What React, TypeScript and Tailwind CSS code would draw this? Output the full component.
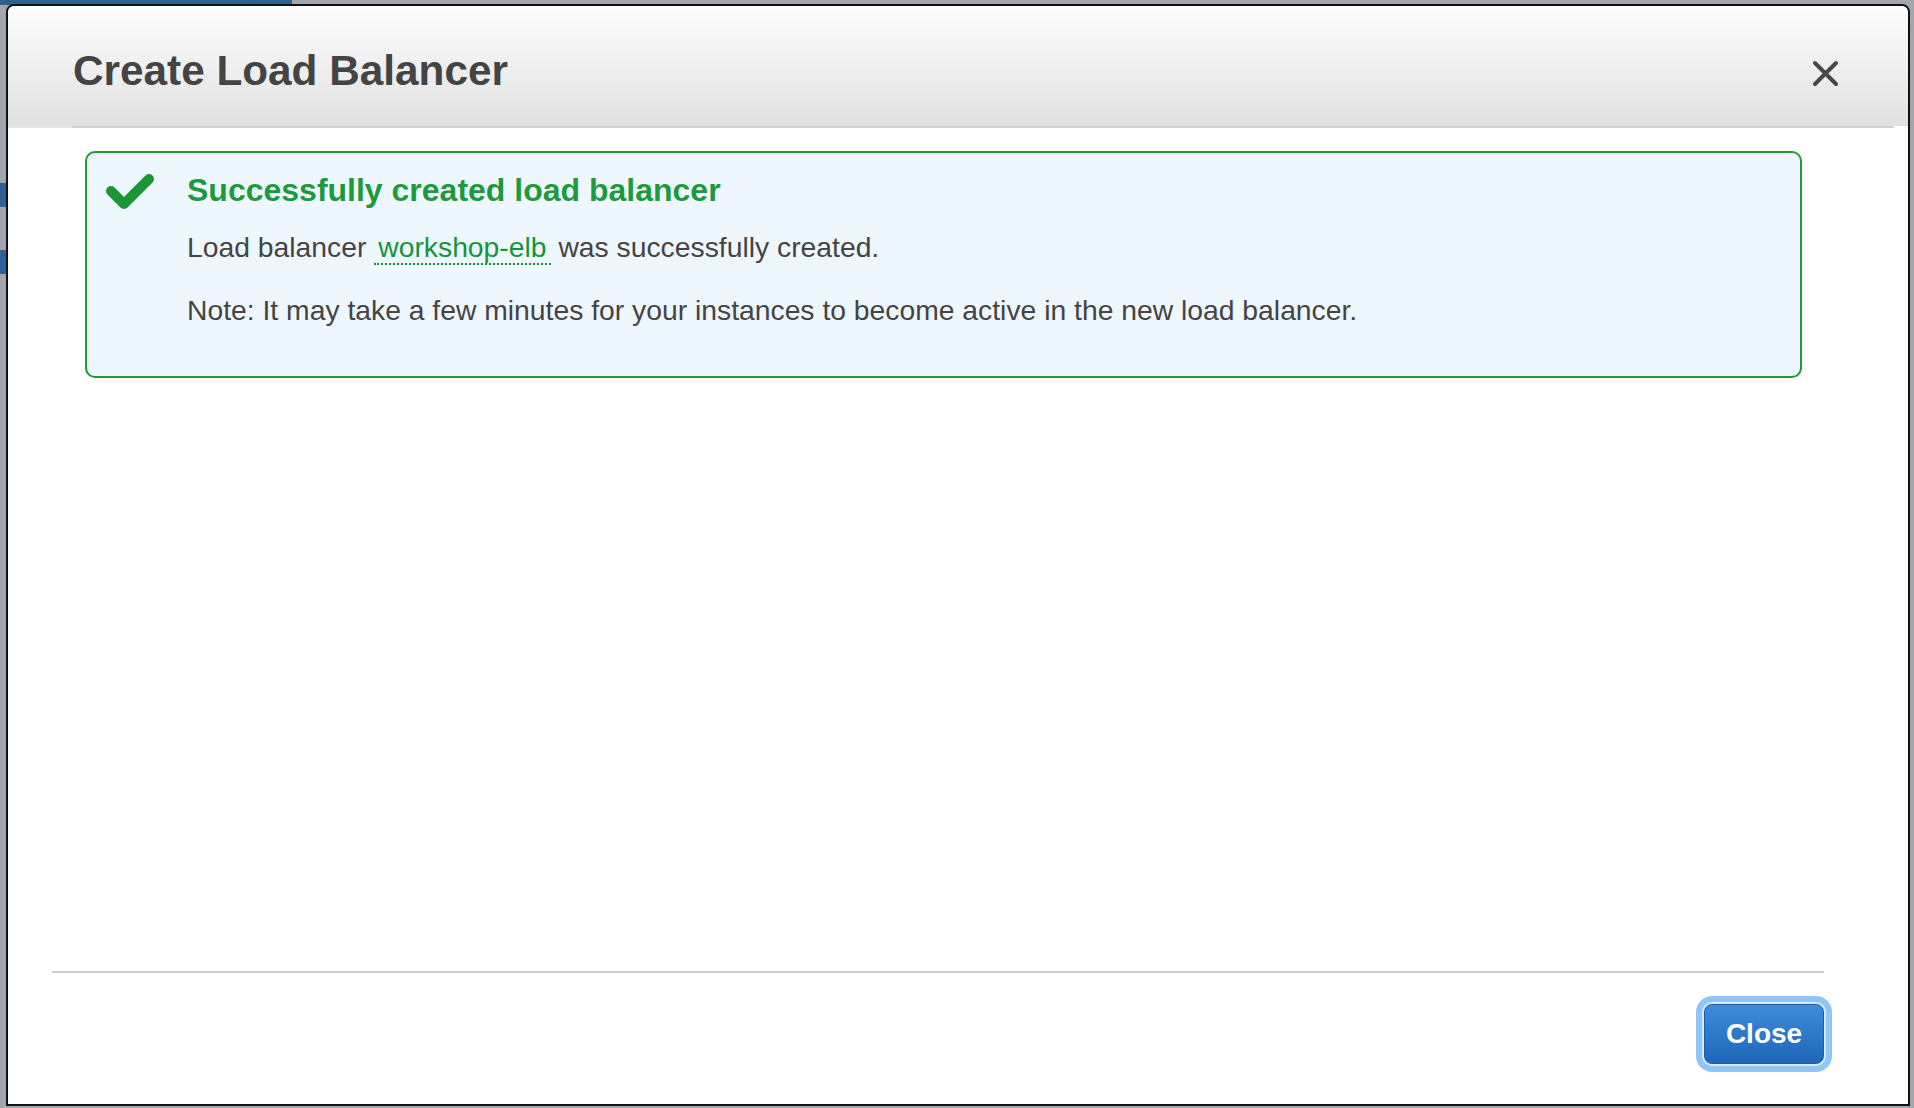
// Success alert shown after a load balancer is created
function SuccessAlert() {
  return (
    <div className="ml-[77px] mr-[106px] mt-[23px] h-[227px] rounded-[10px] border-2 border-[#1d9a3b] bg-[#eff7fe] pl-[19px] pt-[20px] flex">
      <svg width="48" height="37" viewBox="0 0 48 37" className="shrink-0">
        <path
          d="M5 18 L18 31 L43 6"
          fill="none"
          stroke="#1a9636"
          strokeWidth="10"
          strokeLinecap="round"
          strokeLinejoin="round"
        />
      </svg>
      <div className="ml-[33px] pt-[1px]">
        <h2 className="text-[32px] leading-[32px] font-bold text-[#1d9a3b]">
          Successfully created load balancer
        </h2>
        <p className="mt-[27px] text-[28.3px] leading-[28px] text-[#444]">
          Load balancer{" "}
          <a className="px-[4px] text-[#16943a] border-b-2 border-dotted border-[#16943a]">workshop-elb</a>{" "}
          was successfully created.
        </p>
        <p className="mt-[35px] text-[28.3px] leading-[28px] text-[#444]">
          Note: It may take a few minutes for your instances to become active in the new load balancer.
        </p>
      </div>
    </div>
  )
}

export default function App() {
  return (
    <div
      className="relative w-[1914px] h-[1108px] overflow-hidden bg-[#a3a7ad]"
      style={{ fontFamily: '"Liberation Sans", Arial, sans-serif' }}
    >
      {/* page behind the dialog */}
      <div className="absolute left-0 top-0 w-[292px] h-[5px] bg-[#2f5f90]" />
      <div className="absolute left-0 top-[183px] w-[6px] h-[24px] bg-[#2f6198]" />
      <div className="absolute left-0 top-[250px] w-[6px] h-[24px] bg-[#2f6198]" />

      {/* dialog */}
      <div className="absolute left-[6px] top-[4px] w-[1904px] h-[1102px] border-2 border-[#111] rounded-t-[8px] bg-white flex flex-col overflow-hidden">
        <div className="h-[120px] flex items-start justify-between bg-gradient-to-b from-[#fefefe] to-[#e1e1e1] rounded-t-[6px]">
          <h1 className="pl-[65px] pt-[44px] text-[42.3px] leading-[42px] font-bold text-[#444]">
            Create Load Balancer
          </h1>
          <button className="mt-[54px] mr-[69px]">
            <svg width="27" height="27" viewBox="0 0 27 27">
              <path d="M3 3 L24 24 M24 3 L3 24" stroke="#484848" strokeWidth="4" strokeLinecap="round" />
            </svg>
          </button>
        </div>
        <div className="flex h-[2px]">
          <div className="w-[64px] bg-[#e6e6e6]" />
          <div className="flex-1 bg-[#d2d2d2]" />
          <div className="w-[14px]" />
        </div>

        <SuccessAlert />

        <div className="mt-auto ml-[44px] mr-[84px] mb-[40px] flex flex-col">
          <div className="h-[2px] bg-[#cccccc]" />
          <div className="mt-[31px] flex justify-end">
            <button className="w-[120px] h-[60px] rounded-[8px] border border-[#1b5ca8] bg-gradient-to-b from-[#3d8ddb] to-[#1f66b7] text-white text-[28px] font-bold shadow-[0_0_0_2px_#d6ebff,0_0_0_8px_#8fc5f7]">
              Close
            </button>
          </div>
        </div>
      </div>
    </div>
  )
}
